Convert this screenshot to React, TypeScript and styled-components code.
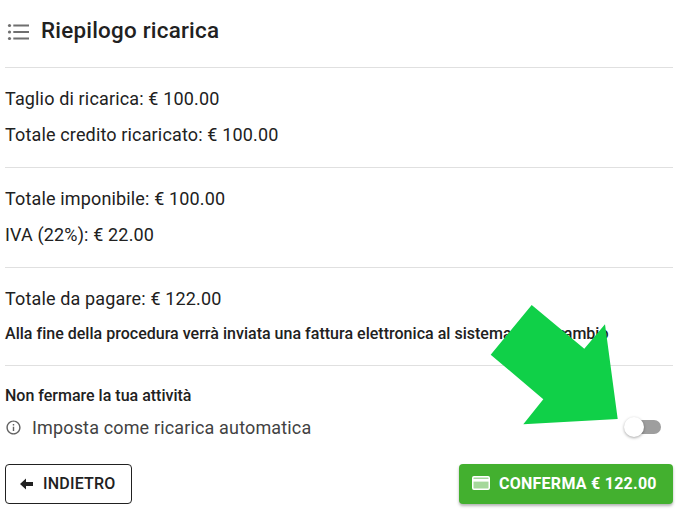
import React from 'react';
import styled, { createGlobalStyle } from 'styled-components';

const GlobalStyle = createGlobalStyle`
  html, body {
    margin: 0;
    padding: 0;
    background: #fff;
    font-family: Roboto, "Liberation Sans", sans-serif;
    color: #212121;
  }
`;

const Page = styled.div`
  position: relative;
  width: 677px;
  height: 514px;
  overflow: hidden;
  padding: 0 4px 0 5px;
  box-sizing: border-box;
`;

const Header = styled.div`
  display: flex;
  align-items: center;
  height: 67px;
  padding: 0 0 8px 1px;
  box-sizing: border-box;
  gap: 11px;
`;

const Title = styled.h2`
  margin: 0;
  font-size: 22.4px;
  font-weight: 500;
  letter-spacing: 0.22px;
  color: #212121;
`;

const Divider = styled.hr`
  margin: 0;
  border: 0;
  height: 1px;
  background: #e0e0e0;
`;

const Section = styled.div<{ $height: number }>`
  height: ${(p) => p.$height}px;
  padding-top: 13px;
  box-sizing: border-box;
`;

const Line = styled.div`
  font-size: 18px;
  line-height: 36px;
  letter-spacing: 0.15px;
`;

const Note = styled.div`
  font-size: 16px;
  font-weight: 500;
  line-height: 20px;
  margin-top: 7px;
  letter-spacing: 0.02px;
`;

const NoteTight = styled.span`
  letter-spacing: -1.8px;
`;

const AutoBlock = styled.div`
  padding-top: 20px;
`;

const AutoTitle = styled.div`
  font-size: 16px;
  font-weight: 500;
  line-height: 20px;
`;

const AutoRow = styled.div`
  display: flex;
  align-items: center;
  height: 32px;
  margin-top: 5px;
  padding-right: 12px;
`;

const AutoLabel = styled.span`
  flex: 1;
  margin-left: 10px;
  font-size: 18px;
  letter-spacing: 0.15px;
  color: #424242;
`;

const Switch = styled.div`
  position: relative;
  width: 34px;
  height: 14px;
  border-radius: 7px;
  background: #9e9e9e;
`;

const Thumb = styled.span`
  position: absolute;
  left: -3px;
  top: -3px;
  width: 20px;
  height: 20px;
  border-radius: 50%;
  background: #fff;
  box-shadow: 0 1px 3px rgba(0, 0, 0, 0.35);
`;

const Actions = styled.div`
  display: flex;
  justify-content: space-between;
  align-items: center;
  margin-top: 21px;
`;

const BackButton = styled.button`
  display: flex;
  align-items: center;
  gap: 10px;
  width: 127px;
  height: 40px;
  padding: 0 0 1px 14px;
  box-sizing: border-box;
  border: 1px solid #212121;
  border-radius: 4px;
  background: #fff;
  color: #212121;
  font-family: inherit;
  font-size: 16px;
  font-weight: 500;
  letter-spacing: 0.2px;
`;

const ConfirmButton = styled.button`
  display: flex;
  align-items: center;
  gap: 9px;
  width: 214px;
  height: 40px;
  padding: 0 0 2px 13px;
  box-sizing: border-box;
  border: 0;
  border-radius: 4px;
  background: #43b02f;
  color: #fff;
  font-family: inherit;
  font-size: 16px;
  font-weight: 700;
  letter-spacing: 0.26px;
  box-shadow: 0 2px 3px rgba(0, 0, 0, 0.3);
`;

const ArrowOverlay = styled.svg`
  position: absolute;
  left: 0;
  top: 0;
  pointer-events: none;
`;

const ListIcon = () => (
  <svg width="24" height="24" viewBox="0 0 24 24" fill="#6f6f6f">
    <circle cx="3.5" cy="7.5" r="1.6" />
    <circle cx="3.5" cy="14" r="1.6" />
    <circle cx="3.5" cy="20.5" r="1.6" />
    <path d="M7.3 6.4H23v2.2H7.3zM7.3 12.9H23v2.2H7.3zM7.3 19.4H23v2.2H7.3z" />
  </svg>
);

const InfoIcon = () => (
  <svg width="17" height="17" viewBox="0 0 24 24" fill="#616161">
    <path d="M11 7h2v2h-2zm0 4h2v6h-2zm1-9C6.48 2 2 6.48 2 12s4.48 10 10 10 10-4.48 10-10S17.52 2 12 2zm0 18c-4.41 0-8-3.59-8-8s3.59-8 8-8 8 3.59 8 8-3.59 8-8 8z" />
  </svg>
);

const BackIcon = () => (
  <svg width="13" height="12" viewBox="0 0 13 12" fill="#212121">
    <path d="M0 6l6-5.5V4h7v4H6v3.5z" />
  </svg>
);

const CardIcon = () => (
  <svg width="18" height="14" viewBox="0 0 18 14">
    <rect x="0.75" y="0.75" width="16.5" height="12.5" rx="1.2" fill="#a5d89b" stroke="#fff" strokeWidth="1.5" />
    <rect x="1" y="3" width="16" height="2.6" fill="#fff" />
  </svg>
);

export default function App() {
  return (
    <>
      <GlobalStyle />
      <Page>
        <Header>
          <ListIcon />
          <Title>Riepilogo ricarica</Title>
        </Header>
        <Divider />
        <Section $height={99}>
          <Line>Taglio di ricarica: € 100.00</Line>
          <Line>Totale credito ricaricato: € 100.00</Line>
        </Section>
        <Divider />
        <Section $height={99}>
          <Line>Totale imponibile: € 100.00</Line>
          <Line>IVA (22%): € 22.00</Line>
        </Section>
        <Divider />
        <Section $height={97}>
          <Line>Totale da pagare: € 122.00</Line>
          <Note>
            Alla fine della procedura verrà inviata una fattura elettronica al sistema{' '}
            <NoteTight>di intersc</NoteTight>ambio
          </Note>
        </Section>
        <Divider />
        <AutoBlock>
          <AutoTitle>Non fermare la tua attività</AutoTitle>
          <AutoRow>
            <InfoIcon />
            <AutoLabel>Imposta come ricarica automatica</AutoLabel>
            <Switch>
              <Thumb />
            </Switch>
          </AutoRow>
        </AutoBlock>
        <Actions>
          <BackButton>
            <BackIcon />
            INDIETRO
          </BackButton>
          <ConfirmButton>
            <CardIcon />
            CONFERMA € 122.00
          </ConfirmButton>
        </Actions>
        <ArrowOverlay width="677" height="514" viewBox="0 0 677 514">
          <polygon
            fill="#10d048"
            points="531.7,305 584.3,348.7 605,324.3 617.7,419 523.3,424.3 543.3,399.3 490.7,354.7"
          />
        </ArrowOverlay>
      </Page>
    </>
  );
}
